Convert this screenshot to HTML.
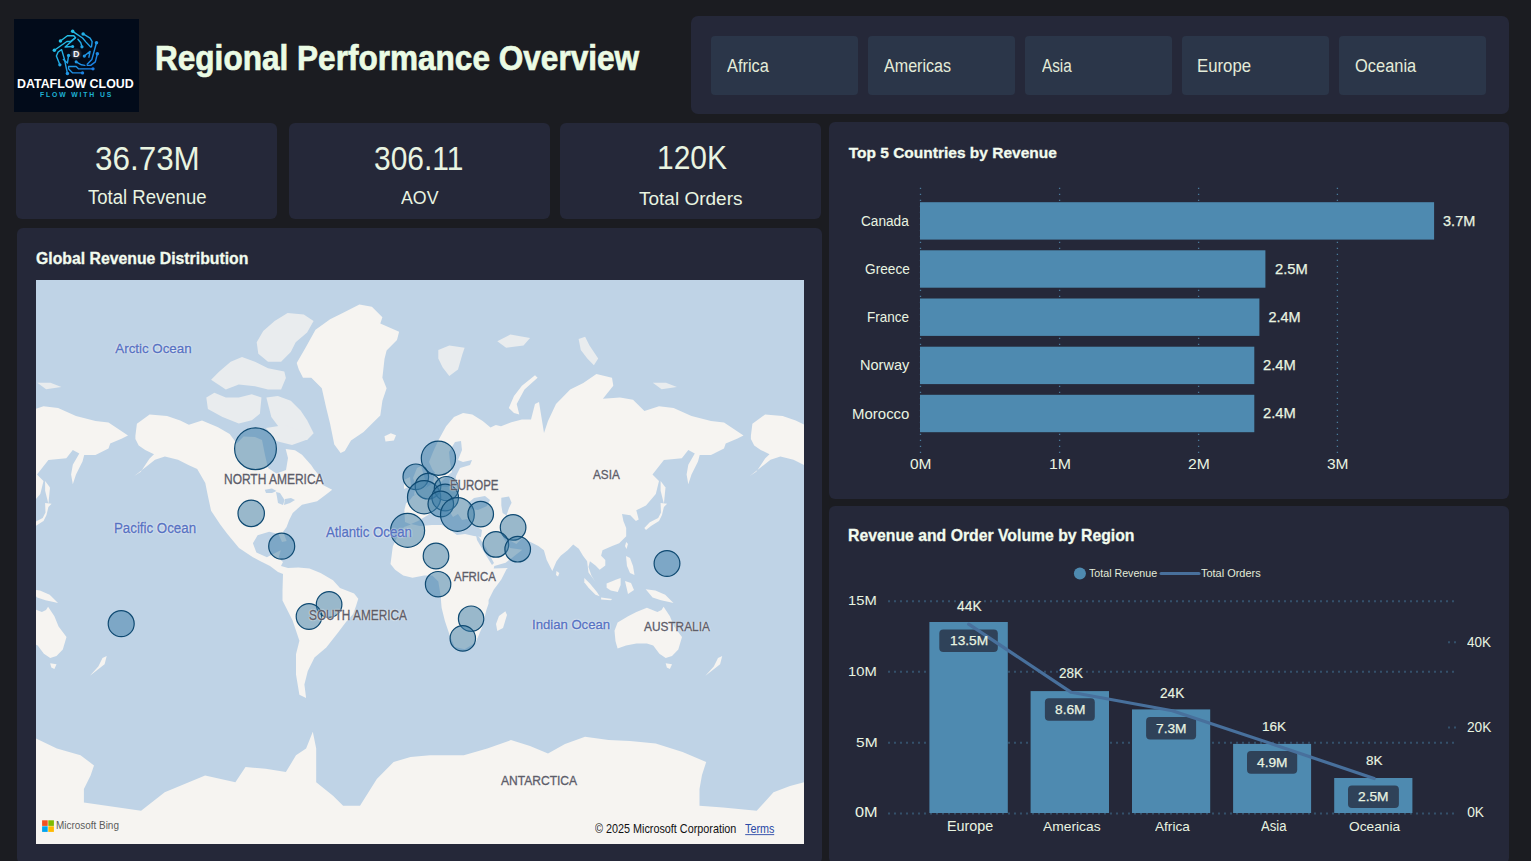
<!DOCTYPE html>
<html><head><meta charset="utf-8">
<style>
*{margin:0;padding:0;box-sizing:border-box}
html,body{width:1531px;height:861px;overflow:hidden;background:#1b1c21;font-family:"Liberation Sans",sans-serif;color:#eaf6e3}
.abs{position:absolute}
.card{position:absolute;background:#252839;border-radius:6px}
.t{position:absolute;white-space:nowrap;line-height:1;transform-origin:0 0}
.btn{position:absolute;top:35.5px;width:147px;height:59.5px;background:#2b3649;border-radius:4px}
svg{position:absolute;overflow:visible}
</style></head><body>

<!-- logo -->
<div class="abs" style="left:14px;top:18.5px;width:125px;height:93.5px;background:#020b1a"></div>
<svg style="left:0;top:0" width="160" height="120">
 <defs>
  <linearGradient id="lg" gradientUnits="userSpaceOnUse" x1="100" y1="100" x2="800" y2="800"><stop offset="0" stop-color="#27d3ea"/><stop offset="1" stop-color="#1a72e2"/></linearGradient>
  <radialGradient id="glow"><stop offset="0" stop-color="#ffffff" stop-opacity="0.35"/><stop offset="1" stop-color="#ffffff" stop-opacity="0"/></radialGradient>
 </defs>
 <g transform="translate(50,27) scale(0.05811)">
  <g fill="none" stroke="url(#lg)" stroke-width="24" stroke-linejoin="round" stroke-linecap="round">
   <polyline points="180,240 300,150 410,150 440,185 260,345 390,335"/>
   <polyline points="75,400 290,250 350,250 430,190"/>
   <polyline points="390,75 560,190 620,260 700,345"/>
   <polyline points="570,120 690,190 725,250 715,340"/>
   <polyline points="480,210 530,270 550,340"/>
   <polyline points="800,270 720,560 640,640"/>
   <polyline points="815,460 780,600 700,660 640,660"/>
   <polyline points="590,500 690,420 670,520"/>
   <polyline points="740,720 490,720 450,680 320,680 320,720"/>
   <polyline points="560,790 390,790 330,730"/>
   <polyline points="450,600 540,650 600,660"/>
   <polyline points="170,650 110,500 140,430 200,390 250,560 300,800"/>
   <polyline points="230,560 300,620 320,490"/>
  </g>
  <g fill="url(#lg)">
   <circle cx="180" cy="240" r="30"/><circle cx="75" cy="400" r="30"/><circle cx="390" cy="335" r="26"/><circle cx="390" cy="75" r="30"/><circle cx="570" cy="120" r="30"/><circle cx="550" cy="340" r="28"/><circle cx="800" cy="270" r="30"/><circle cx="815" cy="460" r="30"/><circle cx="590" cy="500" r="28"/><circle cx="740" cy="720" r="28"/><circle cx="560" cy="790" r="28"/><circle cx="450" cy="600" r="26"/><circle cx="170" cy="650" r="28"/><circle cx="300" cy="800" r="30"/><circle cx="320" cy="490" r="28"/>
  </g>
  <circle cx="447" cy="462" r="110" fill="url(#glow)"/>
 </g>
 <text x="73.1" y="57.3" font-family="Liberation Sans" font-weight="bold" font-size="9" fill="#f4f8ff">D</text>
</svg>

<!-- slicer -->
<div class="card" style="left:691px;top:16px;width:818px;height:98px;border-radius:7px"></div>
<div class="btn" style="left:710.7px"></div>
<div class="btn" style="left:867.9px"></div>
<div class="btn" style="left:1024.9px"></div>
<div class="btn" style="left:1181.9px"></div>
<div class="btn" style="left:1339px"></div>

<!-- KPI cards -->
<div class="card" style="left:16px;top:123px;width:261px;height:96px"></div>
<div class="card" style="left:289px;top:123px;width:261px;height:96px"></div>
<div class="card" style="left:560px;top:123px;width:261px;height:96px"></div>

<!-- map panel -->
<div class="card" style="left:16.5px;top:228px;width:805.5px;height:636px"></div>
<div class="abs" style="left:36px;top:280px;width:768px;height:564px;background:#bfd3e6;overflow:hidden">
<svg style="left:0;top:0" width="768" height="564" viewBox="0 0 768 564">
<g fill="#f6f4f1"><polygon points="99.4,155.7 100.9,143.7 113.6,134.5 131.1,136.0 144.2,140.4 152.9,144.8 166.0,140.4 179.1,145.9 182.0,147.2 193.7,154.1 200.7,163.4 207.6,156.5 219.0,157.0 226.0,160.0 229.0,175.0 232.0,188.0 240.5,193.4 250.0,190.0 252.0,178.0 249.7,169.0 259.0,170.2 266.0,174.8 275.3,185.3 277.6,188.8 282.3,194.6 286.9,205.0 296.2,209.7 290.4,214.3 281.1,221.3 266.0,224.8 256.7,232.9 253.2,240.0 250.6,247.0 247.1,251.7 250.6,261.0 246.0,262.1 242.5,254.0 233.2,251.7 221.6,255.2 216.9,263.3 220.4,272.6 230.9,277.2 240.1,272.6 244.8,270.3 242.5,278.0 247.0,282.0 245.0,286.0 252.0,288.0 262.3,287.4 273.5,288.4 284.6,293.0 297.0,300.2 304.0,308.0 318.1,313.5 322.3,318.7 320.0,326.0 317.2,333.9 310.0,342.0 302.1,352.4 290.3,367.5 278.5,377.6 271.8,391.1 268.4,404.6 270.1,418.0 263.4,414.7 260.0,394.5 260.0,374.3 263.4,360.8 256.6,340.6 246.5,320.4 246.5,310.3 247.0,294.0 242.0,292.0 234.0,286.0 224.0,281.0 216.9,277.2 203.0,268.0 191.4,254.0 184.4,244.7 175.1,230.8 171.6,214.5 169.3,202.9 161.2,189.0 152.9,185.2 142.0,179.7 128.9,176.5 119.0,179.7 109.2,187.4 98.3,196.1 104.8,191.7 113.6,178.6 118.0,174.3 109.2,169.9 102.7,165.5 99.4,159.0"/><polygon points="714.9,155.7 716.4,143.7 729.1,134.5 746.6,136.0 759.7,140.4 768.4,144.8 781.5,140.4 794.6,145.9 797.5,147.2 809.2,154.1 816.2,163.4 823.1,156.5 834.5,157.0 841.5,160.0 844.5,175.0 847.5,188.0 856.0,193.4 865.5,190.0 867.5,178.0 865.2,169.0 874.5,170.2 881.5,174.8 890.8,185.3 893.1,188.8 897.8,194.6 902.4,205.0 911.7,209.7 905.9,214.3 896.6,221.3 881.5,224.8 872.2,232.9 868.7,240.0 866.1,247.0 862.6,251.7 866.1,261.0 861.5,262.1 858.0,254.0 848.7,251.7 837.1,255.2 832.4,263.3 835.9,272.6 846.4,277.2 855.6,272.6 860.3,270.3 858.0,278.0 862.5,282.0 860.5,286.0 867.5,288.0 877.8,287.4 889.0,288.4 900.1,293.0 912.5,300.2 919.5,308.0 933.6,313.5 937.8,318.7 935.5,326.0 932.7,333.9 925.5,342.0 917.6,352.4 905.8,367.5 894.0,377.6 887.3,391.1 883.9,404.6 885.6,418.0 878.9,414.7 875.5,394.5 875.5,374.3 878.9,360.8 872.1,340.6 862.0,320.4 862.0,310.3 862.5,294.0 857.5,292.0 849.5,286.0 839.5,281.0 832.4,277.2 818.5,268.0 806.9,254.0 799.9,244.7 790.6,230.8 787.1,214.5 784.8,202.9 776.7,189.0 768.4,185.2 757.5,179.7 744.4,176.5 734.5,179.7 724.7,187.4 713.8,196.1 720.3,191.7 729.1,178.6 733.5,174.3 724.7,169.9 718.2,165.5 714.9,159.0"/><polygon points="227.2,50.9 238.6,41.1 251.6,33.0 267.8,34.6 277.6,41.1 271.1,52.5 259.7,62.3 254.8,72.0 245.1,81.8 232.0,81.8 222.3,73.7 220.7,62.3" fill="#e9ecee"/><polygon points="175.1,99.7 183.3,91.5 194.7,81.8 206.0,76.9 219.0,81.8 232.0,88.3 248.3,91.5 249.9,98.0 245.1,109.4 232.0,109.4 219.0,106.2 202.8,104.6 189.8,109.4" fill="#e9ecee"/><polygon points="170.3,117.6 178.4,112.7 189.8,117.6 202.8,117.6 215.8,114.3 225.5,117.6 223.9,133.8 215.8,140.3 202.8,143.6 186.5,137.1 171.9,128.9" fill="#e9ecee"/><polygon points="230.4,117.6 241.8,115.9 254.8,120.8 264.6,130.6 271.1,140.3 277.6,153.3 271.1,160.0 254.8,160.0 245.1,150.1 235.3,137.1" fill="#e9ecee"/><polygon points="230.0,148.0 249.0,145.0 264.0,151.0 270.0,160.0 256.0,165.0 240.0,161.0" fill="#e9ecee"/><polygon points="260.7,83.1 269.1,68.5 279.5,49.7 294.1,39.3 306.7,33.0 323.4,24.6 335.9,26.7 346.4,37.2 344.3,43.4 363.1,51.8 361.0,60.1 350.6,70.6 348.5,79.0 346.4,97.8 350.6,108.2 346.4,120.7 344.3,135.4 335.9,143.7 327.6,152.1 315.0,160.4 308.8,170.9 304.6,173.0 298.3,164.6 294.1,143.7 290.0,127.0 285.8,108.2 275.3,97.8 267.0,97.8 262.8,89.4"/><polygon points="348.5,156.3 354.8,153.2 360.0,155.3 357.9,160.5 349.5,161.6"/><polygon points="393.0,182.0 397.0,172.0 402.3,160.5 410.1,146.2 418.0,137.0 427.1,133.1 436.3,134.4 446.7,141.0 454.5,147.5 459.8,144.9 465.0,146.2 475.4,142.3 485.9,139.6 495.0,139.6 499.0,124.0 503.0,122.0 508.0,153.0 512.0,141.0 520.0,124.0 534.2,109.6 547.3,103.1 560.4,93.9 576.0,97.8 577.3,105.7 566.9,118.7 584.0,117.4 597.0,119.8 608.4,131.1 623.0,126.3 637.6,127.9 655.5,136.0 675.0,140.9 688.0,142.5 697.8,149.0 707.5,155.5 701.0,158.8 689.7,163.6 688.0,168.5 675.0,175.0 663.7,175.0 662.0,181.5 655.5,194.5 652.3,204.3 650.6,194.5 652.3,184.8 658.8,173.4 652.3,170.1 645.8,178.3 627.9,179.9 616.5,194.5 623.0,201.0 619.8,214.0 610.0,225.4 600.3,230.3 602.7,239.5 599.9,240.9 594.3,235.3 586.0,233.9 587.4,240.9 590.2,247.9 590.2,256.2 583.2,263.2 576.2,266.0 566.5,270.2 565.1,275.7 569.3,279.9 569.3,285.5 563.7,289.7 559.5,285.5 553.9,281.3 552.5,286.9 555.3,295.3 559.5,302.2 556.7,298.0 552.5,292.5 551.1,281.3 547.0,275.7 542.8,268.8 537.2,264.6 531.6,270.2 524.7,275.7 520.5,281.3 516.3,291.1 510.7,279.9 507.9,270.2 502.4,266.0 494.0,261.8 485.8,258.6 480.4,263.9 466.3,256.5 474.0,268.0 486.3,269.8 469.6,282.8 458.3,286.0 457.7,288.4 471.9,287.9 470.5,289.2 465.3,299.5 457.7,309.7 452.6,320.0 452.6,323.4 450.4,330.0 446.0,347.5 439.5,362.7 428.6,369.3 418.7,367.1 413.3,354.0 408.9,340.9 405.6,327.8 404.5,314.7 402.3,301.6 396.3,295.5 388.1,295.5 376.5,297.8 367.2,295.5 359.1,289.7 354.5,283.9 355.6,275.7 356.8,266.5 362.0,255.0 368.0,247.0 375.0,244.5 369.0,241.9 368.4,230.0 370.0,223.5 374.0,220.0 376.8,216.2 384.0,212.0 397.0,203.0 399.0,192.7 396.4,189.6"/><polygon points="-222.5,182.0 -218.5,172.0 -213.2,160.5 -205.4,146.2 -197.5,137.0 -188.4,133.1 -179.2,134.4 -168.8,141.0 -161.0,147.5 -155.7,144.9 -150.5,146.2 -140.1,142.3 -129.6,139.6 -120.5,139.6 -116.5,124.0 -112.5,122.0 -107.5,153.0 -103.5,141.0 -95.5,124.0 -81.3,109.6 -68.2,103.1 -55.1,93.9 -39.5,97.8 -38.2,105.7 -48.6,118.7 -31.5,117.4 -18.5,119.8 -7.1,131.1 7.5,126.3 22.1,127.9 40.0,136.0 59.5,140.9 72.5,142.5 82.3,149.0 92.0,155.5 85.5,158.8 74.2,163.6 72.5,168.5 59.5,175.0 48.2,175.0 46.5,181.5 40.0,194.5 36.8,204.3 35.1,194.5 36.8,184.8 43.3,173.4 36.8,170.1 30.3,178.3 12.4,179.9 1.0,194.5 7.5,201.0 4.3,214.0 -5.5,225.4 -15.2,230.3 -12.8,239.5 -15.6,240.9 -21.2,235.3 -29.5,233.9 -28.1,240.9 -25.3,247.9 -25.3,256.2 -32.3,263.2 -39.3,266.0 -49.0,270.2 -50.4,275.7 -46.2,279.9 -46.2,285.5 -51.8,289.7 -56.0,285.5 -61.6,281.3 -63.0,286.9 -60.2,295.3 -56.0,302.2 -58.8,298.0 -63.0,292.5 -64.4,281.3 -68.5,275.7 -72.7,268.8 -78.3,264.6 -83.9,270.2 -90.8,275.7 -95.0,281.3 -99.2,291.1 -104.8,279.9 -107.6,270.2 -113.1,266.0 -121.5,261.8 -129.7,258.6 -135.1,263.9 -149.2,256.5 -141.5,268.0 -129.2,269.8 -145.9,282.8 -157.2,286.0 -157.8,288.4 -143.6,287.9 -145.0,289.2 -150.2,299.5 -157.8,309.7 -162.9,320.0 -162.9,323.4 -165.1,330.0 -169.5,347.5 -176.0,362.7 -186.9,369.3 -196.8,367.1 -202.2,354.0 -206.6,340.9 -209.9,327.8 -211.0,314.7 -213.2,301.6 -219.2,295.5 -227.4,295.5 -239.0,297.8 -248.3,295.5 -256.4,289.7 -261.0,283.9 -259.9,275.7 -258.7,266.5 -253.5,255.0 -247.5,247.0 -240.5,244.5 -246.5,241.9 -247.1,230.0 -245.5,223.5 -241.5,220.0 -238.7,216.2 -231.5,212.0 -218.5,203.0 -216.5,192.7 -219.1,189.6"/><polygon points="381.0,188.0 385.0,186.0 388.0,196.0 391.0,206.0 386.0,212.0 378.0,215.0 380.0,205.0 377.0,198.0"/><polygon points="368.0,200.0 374.0,197.0 375.0,206.0 368.0,209.0"/><polygon points="469.4,331.2 471.0,335.0 467.0,348.0 461.3,351.0 460.0,344.0 463.0,336.0"/><polygon points="520.5,291.0 523.3,293.0 522.0,296.5 520.0,295.0"/><polygon points="472.8,127.9 478.0,116.1 485.9,105.7 499.0,95.2 501.6,97.8 488.5,109.6 480.7,124.0 483.3,134.4 478.0,133.1"/><polygon points="402.3,69.9 413.3,65.5 428.6,67.7 426.4,74.3 422.0,89.6 413.3,96.1 406.7,87.4 402.3,78.6" fill="#e9ecee"/><polygon points="461.3,61.2 474.4,54.6 494.1,57.9 487.5,65.5 470.1,67.7" fill="#e9ecee"/><polygon points="542.6,59.0 549.1,56.8 553.5,65.5 562.2,78.6 557.9,85.2 551.3,78.6 544.8,69.9" fill="#e9ecee"/><polygon points="616.8,102.7 630.0,102.7 640.9,107.0 625.6,109.2" fill="#e9ecee"/><polygon points="1.3,102.7 14.5,102.7 25.4,107.0 10.1,109.2" fill="#e9ecee"/><polygon points="608.3,247.9 613.8,242.3 622.2,238.1 625.0,232.5 624.6,223.0 631.1,223.8 627.9,227.0 626.0,235.0 623.0,241.0 615.0,246.0 610.0,250.0"/><polygon points="-7.2,247.9 -1.7,242.3 6.7,238.1 9.5,232.5 9.1,223.0 15.6,223.8 12.4,227.0 10.5,235.0 7.5,241.0 -0.5,246.0 -5.5,250.0"/><polygon points="624.6,201.0 629.5,207.5 627.9,223.8 624.6,210.8"/><polygon points="9.1,201.0 14.0,207.5 12.4,223.8 9.1,210.8"/><polygon points="590.2,262.0 592.0,264.0 590.5,269.0 589.0,266.0"/><polygon points="590.0,276.0 594.0,278.0 597.0,286.0 598.5,295.0 594.0,293.0 591.0,286.0"/><polygon points="548.3,298.0 553.9,303.6 560.9,312.0 563.7,316.2 559.5,314.8 552.5,307.8 548.3,302.2"/><polygon points="565.1,317.5 576.2,318.9 574.8,320.3 565.1,319.6"/><polygon points="570.6,303.6 580.4,299.4 584.6,298.0 584.6,305.0 581.8,312.0 574.8,310.6 570.6,307.8"/><polygon points="589.0,301.0 595.0,303.0 598.0,310.0 592.0,314.0"/><polygon points="609.7,309.2 619.4,310.6 629.2,314.8 637.5,323.1 632.0,321.7 625.0,320.3 616.6,317.5"/><polygon points="-5.8,309.2 3.9,310.6 13.7,314.8 22.0,323.1 16.5,321.7 9.5,320.3 1.1,317.5"/><polygon points="578.5,350.8 581.6,342.4 592.1,336.2 600.4,332.0 610.9,327.8 621.4,332.0 625.5,329.9 627.6,326.8 633.9,336.2 638.1,346.6 646.0,357.1 642.3,369.6 636.0,375.9 629.7,378.0 623.4,373.8 617.2,365.4 610.9,363.4 600.4,363.4 590.0,365.4 581.6,368.6 579.5,361.3"/><polygon points="-37.0,350.8 -33.9,342.4 -23.4,336.2 -15.1,332.0 -4.6,327.8 5.9,332.0 10.0,329.9 12.1,326.8 18.4,336.2 22.6,346.6 30.5,357.1 26.8,369.6 20.5,375.9 14.2,378.0 7.9,373.8 1.7,365.4 -4.6,363.4 -15.1,363.4 -25.5,365.4 -33.9,368.6 -36.0,361.3"/><polygon points="629.7,383.2 636.0,384.3 633.9,388.9 630.8,387.4"/><polygon points="14.2,383.2 20.5,384.3 18.4,388.9 15.3,387.4"/><polygon points="669.4,395.8 677.8,386.4 682.0,378.0 686.2,375.9 684.1,384.3 673.6,392.6"/><polygon points="53.9,395.8 62.3,386.4 66.5,378.0 70.7,375.9 68.6,384.3 58.1,392.6"/><polygon points="0.0,458.5 20.9,468.6 44.5,475.3 58.0,485.4 54.6,495.5 47.9,509.0 47.9,522.4 105.1,530.8 128.7,512.3 169.1,495.5 199.4,502.2 209.5,487.1 229.7,488.8 249.9,492.1 260.0,475.3 270.1,468.6 276.8,451.7 280.2,468.6 280.2,502.2 297.0,515.7 307.1,525.8 324.0,525.8 340.8,498.9 357.6,482.0 374.5,477.0 394.0,475.3 427.8,475.3 451.3,468.6 474.9,460.1 494.0,466.0 512.0,473.6 529.0,464.0 549.0,456.8 572.6,460.1 594.0,461.0 619.7,463.5 646.6,471.9 670.2,482.0 666.0,495.0 663.5,509.0 663.5,525.8 687.0,527.5 720.7,530.8 737.5,512.3 754.0,506.0 768.0,502.2 768.0,564.0 0.0,564.0"/></g><g fill="#bfd3e6"><polygon points="228.8,209.7 236.0,208.5 240.5,211.0 236.0,213.0 230.0,213.0"/><polygon points="240.0,212.0 244.0,213.0 248.6,220.0 247.0,225.0 242.0,223.0 241.0,217.0"/><polygon points="249.0,219.0 255.0,218.0 259.0,220.0 254.0,223.0 248.0,225.0"/><polygon points="375.0,244.0 382.0,241.0 392.0,235.0 398.0,230.0 405.0,227.0 414.0,232.0 417.0,237.0 422.0,234.0 426.0,240.0 431.0,239.0 438.0,245.0 446.0,250.0 445.0,257.0 438.0,256.0 429.0,254.0 421.0,255.0 414.0,250.0 406.0,245.0 396.0,245.0 384.0,246.0"/><polygon points="432.0,223.0 438.0,218.0 449.0,216.0 454.0,220.0 451.0,226.0 442.0,230.0 434.0,229.0"/><polygon points="465.3,217.7 473.0,216.4 475.6,222.8 473.0,227.9 470.5,235.6 466.6,233.0 465.3,225.3"/><polygon points="440.0,255.0 443.0,257.0 450.0,268.0 458.0,283.0 456.0,285.0 448.0,272.0 441.0,260.0"/><polygon points="401.0,206.0 409.0,198.0 416.0,192.0 414.0,182.0 413.0,172.0 419.0,162.0 425.0,161.0 426.0,170.0 422.0,180.0 427.0,182.0 436.0,180.0 434.0,185.0 424.0,188.0 420.0,196.0 419.0,204.0 411.0,207.0"/></g>
<g fill="#3b7ca6" fill-opacity="0.5" stroke="#0f4a72" stroke-width="1.2">
<circle cx="219.5" cy="168.7" r="20.9"/>
<circle cx="215.2" cy="233.4" r="13.2"/>
<circle cx="245.7" cy="266.2" r="13"/>
<circle cx="85.2" cy="343.7" r="13"/>
<circle cx="293.1" cy="324.5" r="12.8"/>
<circle cx="273" cy="336.5" r="12.8"/>
<circle cx="402.4" cy="178.2" r="17.1"/>
<circle cx="379.8" cy="196.8" r="12.8"/>
<circle cx="392" cy="206.2" r="12.8"/>
<circle cx="388.1" cy="217.2" r="16.6"/>
<circle cx="410.4" cy="208.6" r="12.1"/>
<circle cx="409.2" cy="217.5" r="13.3"/>
<circle cx="404.8" cy="224" r="12.8"/>
<circle cx="421.4" cy="234.5" r="16.9"/>
<circle cx="444.7" cy="234.1" r="12.8"/>
<circle cx="371.6" cy="250.4" r="17"/>
<circle cx="400" cy="276" r="12.8"/>
<circle cx="402.1" cy="304.2" r="12.7"/>
<circle cx="477.1" cy="247.4" r="12.8"/>
<circle cx="459.9" cy="264.4" r="12.8"/>
<circle cx="481.7" cy="269.2" r="12.8"/>
<circle cx="435.1" cy="338.7" r="12.7"/>
<circle cx="426.8" cy="358.4" r="12.7"/>
<circle cx="631" cy="283.5" r="12.9"/>
</g>
<g>
<rect x="6.1" y="540.3" width="5.6" height="5.6" fill="#f25022"/>
<rect x="12.3" y="540.3" width="5.6" height="5.6" fill="#7fba00"/>
<rect x="6.1" y="546.3" width="5.6" height="5.6" fill="#00a4ef"/>
<rect x="12.3" y="546.3" width="5.6" height="5.6" fill="#ffb900"/>
<rect x="709.2" y="554.2" width="29" height="0.9" fill="#2b4aa6"/>
</g>
</svg>
</div>

<!-- top 5 panel -->
<div class="card" style="left:829px;top:122px;width:680px;height:377px"></div>
<svg style="left:0;top:0" width="1531" height="861">
 <g stroke="#4a7a9a" stroke-width="1.3" stroke-dasharray="1.2 4.8">
  <line x1="920.5" y1="187.8" x2="920.5" y2="454"/>
  <line x1="1059.6" y1="187.8" x2="1059.6" y2="454"/>
  <line x1="1198.6" y1="187.8" x2="1198.6" y2="454"/>
  <line x1="1337.4" y1="187.8" x2="1337.4" y2="454"/>
 </g>
 <g fill="#4e8ab0">
  <rect x="920" y="202.2" width="514.1" height="37.4"/>
  <rect x="920" y="250.3" width="345.4" height="37.4"/>
  <rect x="920" y="298.5" width="339.4" height="37.4"/>
  <rect x="920" y="346.7" width="334.3" height="37.4"/>
  <rect x="920" y="394.8" width="334.3" height="37.4"/>
 </g>
</svg>

<!-- revenue region panel -->
<div class="card" style="left:829px;top:506px;width:680px;height:358px"></div>
<svg style="left:0;top:0" width="1531" height="861">
 <g stroke="#34506b" stroke-width="2" stroke-dasharray="2 4">
  <line x1="888" y1="601.2" x2="1455" y2="601.2"/>
  <line x1="888" y1="671.7" x2="1455" y2="671.7"/>
  <line x1="888" y1="742.7" x2="1455" y2="742.7"/>
  <line x1="888" y1="813.6" x2="1455" y2="813.6"/>
  <line x1="1448" y1="642.2" x2="1457" y2="642.2"/>
  <line x1="1448" y1="727.4" x2="1457" y2="727.4"/>
 </g>
 <g fill="#4e8ab0">
  <rect x="929.4" y="622" width="78.4" height="191"/>
  <rect x="1030.6" y="691.1" width="78.4" height="121.9"/>
  <rect x="1132" y="709.4" width="78.2" height="103.6"/>
  <rect x="1233.1" y="743.9" width="78" height="69.1"/>
  <rect x="1334.2" y="778" width="78.2" height="35"/>
 </g>
 <g fill="#2f4259">
  <rect x="939.3" y="629.6" width="58.5" height="22.5" rx="4"/>
  <rect x="1044.9" y="698.3" width="49.9" height="22.5" rx="4"/>
  <rect x="1146.1" y="716.9" width="50" height="22.5" rx="4"/>
  <rect x="1247" y="751" width="50.2" height="22.7" rx="4"/>
  <rect x="1348" y="785.4" width="50.9" height="22.6" rx="4"/>
 </g>
 <polyline points="968.7,624.2 1071.2,692.3 1172.4,710.8 1273.6,744.4 1374.2,778.6" fill="none" stroke="#48709c" stroke-width="3.2" stroke-linejoin="round" stroke-linecap="round"/>
 <circle cx="1079.9" cy="573.4" r="6" fill="#4e8ab0"/>
 <line x1="1161" y1="573.4" x2="1199" y2="573.4" stroke="#48709c" stroke-width="3" stroke-linecap="round"/>
</svg>

<div class="t" style="left:155.03px;top:40.59px;font-size:34.93px;color:#ebfbe4;font-weight:bold;transform:scaleX(0.9037);-webkit-text-stroke:0.7px #ebfbe4;">Regional Performance Overview</div>
<div class="t" style="left:94.82px;top:141.32px;font-size:34.06px;color:#e9f4e1;transform:scaleX(0.9225);">36.73M</div>
<div class="t" style="left:373.96px;top:141.76px;font-size:33.19px;color:#e9f4e1;transform:scaleX(0.9031);">306.11</div>
<div class="t" style="left:656.93px;top:141.34px;font-size:33.91px;color:#e9f4e1;transform:scaleX(0.8838);">120K</div>
<div class="t" style="left:88.11px;top:188.17px;font-size:19.57px;color:#e9f4e1;transform:scaleX(0.9477);">Total Revenue</div>
<div class="t" style="left:401.30px;top:188.88px;font-size:18.84px;color:#e9f4e1;transform:scaleX(0.9428);">AOV</div>
<div class="t" style="left:639.45px;top:188.51px;font-size:19.28px;color:#e9f4e1;transform:scaleX(0.9863);">Total Orders</div>
<div class="t" style="left:727.20px;top:56.03px;font-size:19.13px;color:#e4ecd9;transform:scaleX(0.8568);">Africa</div>
<div class="t" style="left:884.40px;top:56.03px;font-size:19.13px;color:#e4ecd9;transform:scaleX(0.8417);">Americas</div>
<div class="t" style="left:1041.60px;top:56.03px;font-size:19.13px;color:#e4ecd9;transform:scaleX(0.8008);">Asia</div>
<div class="t" style="left:1197.19px;top:56.03px;font-size:19.13px;color:#e4ecd9;transform:scaleX(0.8768);">Europe</div>
<div class="t" style="left:1354.83px;top:56.03px;font-size:19.13px;color:#e4ecd9;transform:scaleX(0.8598);">Oceania</div>
<div class="t" style="left:36.01px;top:250.75px;font-size:15.80px;color:#f2fbee;font-weight:bold;-webkit-text-stroke:0.3px #f2fbee;">Global Revenue Distribution</div>
<div class="t" style="left:848.70px;top:145.30px;font-size:15.51px;color:#f2fbee;font-weight:bold;-webkit-text-stroke:0.3px #f2fbee;">Top 5 Countries by Revenue</div>
<div class="t" style="left:847.51px;top:528.29px;font-size:16.81px;color:#f2fbee;font-weight:bold;transform:scaleX(0.9397);-webkit-text-stroke:0.3px #f2fbee;">Revenue and Order Volume by Region</div>
<div class="t" style="left:861.16px;top:213.82px;font-size:14.06px;color:#e9f4e1;transform:scaleX(0.9697);">Canada</div>
<div class="t" style="left:864.66px;top:261.65px;font-size:14.49px;color:#e9f4e1;transform:scaleX(0.9447);">Greece</div>
<div class="t" style="left:867.44px;top:310.00px;font-size:14.20px;color:#e9f4e1;transform:scaleX(0.9525);">France</div>
<div class="t" style="left:859.66px;top:358.00px;font-size:14.20px;color:#e9f4e1;transform:scaleX(1.0248);">Norway</div>
<div class="t" style="left:852.13px;top:406.82px;font-size:14.06px;color:#e9f4e1;transform:scaleX(1.0663);">Morocco</div>
<div class="t" style="left:1443.05px;top:213.65px;font-size:14.49px;color:#e9f4e1;-webkit-text-stroke:0.25px #e9f4e1;">3.7M</div>
<div class="t" style="left:1274.51px;top:261.65px;font-size:14.49px;color:#e9f4e1;transform:scaleX(1.0176);-webkit-text-stroke:0.25px #e9f4e1;">2.5M</div>
<div class="t" style="left:1268.42px;top:309.85px;font-size:14.49px;color:#e9f4e1;-webkit-text-stroke:0.25px #e9f4e1;">2.4M</div>
<div class="t" style="left:1263.31px;top:357.85px;font-size:14.49px;color:#e9f4e1;transform:scaleX(1.0176);-webkit-text-stroke:0.25px #e9f4e1;">2.4M</div>
<div class="t" style="left:1263.31px;top:406.05px;font-size:14.49px;color:#e9f4e1;transform:scaleX(1.0176);-webkit-text-stroke:0.25px #e9f4e1;">2.4M</div>
<div class="t" style="left:909.92px;top:458.44px;font-size:13.91px;color:#e9f4e1;transform:scaleX(1.1139);">0M</div>
<div class="t" style="left:1048.61px;top:458.44px;font-size:13.91px;color:#e9f4e1;transform:scaleX(1.1415);">1M</div>
<div class="t" style="left:1187.86px;top:458.44px;font-size:13.91px;color:#e9f4e1;transform:scaleX(1.1275);">2M</div>
<div class="t" style="left:1326.92px;top:458.44px;font-size:13.91px;color:#e9f4e1;transform:scaleX(1.1139);">3M</div>
<div class="t" style="left:848.48px;top:594.39px;font-size:13.62px;color:#e9f4e1;transform:scaleX(1.0836);">15M</div>
<div class="t" style="left:848.48px;top:665.29px;font-size:13.62px;color:#e9f4e1;transform:scaleX(1.0836);">10M</div>
<div class="t" style="left:855.91px;top:735.61px;font-size:13.48px;color:#e9f4e1;transform:scaleX(1.1556);">5M</div>
<div class="t" style="left:854.99px;top:806.17px;font-size:13.77px;color:#e9f4e1;transform:scaleX(1.1819);">0M</div>
<div class="t" style="left:1467.39px;top:635.67px;font-size:13.77px;color:#e9f4e1;transform:scaleX(0.9779);">40K</div>
<div class="t" style="left:1466.96px;top:720.20px;font-size:14.20px;color:#e9f4e1;transform:scaleX(0.9651);">20K</div>
<div class="t" style="left:1467.17px;top:806.37px;font-size:13.77px;color:#e9f4e1;">0K</div>
<div class="t" style="left:957.38px;top:598.95px;font-size:14.49px;color:#e9f4e1;transform:scaleX(0.9565);-webkit-text-stroke:0.15px #e9f4e1;">44K</div>
<div class="t" style="left:1058.87px;top:665.90px;font-size:14.20px;color:#e9f4e1;transform:scaleX(0.9488);-webkit-text-stroke:0.15px #e9f4e1;">28K</div>
<div class="t" style="left:1160.36px;top:685.72px;font-size:14.06px;color:#e9f4e1;transform:scaleX(0.9709);-webkit-text-stroke:0.15px #e9f4e1;">24K</div>
<div class="t" style="left:1261.85px;top:719.73px;font-size:13.33px;color:#e9f4e1;transform:scaleX(1.0199);-webkit-text-stroke:0.15px #e9f4e1;">16K</div>
<div class="t" style="left:1366.48px;top:753.61px;font-size:13.48px;color:#e9f4e1;transform:scaleX(1.0050);-webkit-text-stroke:0.15px #e9f4e1;">8K</div>
<div class="t" style="left:946.58px;top:820.07px;font-size:13.77px;color:#e9f4e1;transform:scaleX(1.0430);">Europe</div>
<div class="t" style="left:1042.50px;top:820.33px;font-size:13.33px;color:#e9f4e1;transform:scaleX(1.0372);">Americas</div>
<div class="t" style="left:1154.70px;top:820.21px;font-size:13.48px;color:#e9f4e1;transform:scaleX(1.0105);">Africa</div>
<div class="t" style="left:1260.60px;top:819.87px;font-size:13.77px;color:#e9f4e1;transform:scaleX(0.9527);">Asia</div>
<div class="t" style="left:1348.65px;top:820.09px;font-size:13.62px;color:#e9f4e1;transform:scaleX(1.0102);">Oceania</div>
<div class="t" style="left:1088.63px;top:568.13px;font-size:11.45px;color:#e3ecd9;transform:scaleX(0.9317);">Total Revenue</div>
<div class="t" style="left:1201.13px;top:568.13px;font-size:11.45px;color:#e3ecd9;transform:scaleX(0.9576);">Total Orders</div>
<div class="t" style="left:949.50px;top:634.28px;font-size:13.33px;color:#e9f4e1;transform:scaleX(1.0300);-webkit-text-stroke:0.25px #e9f4e1;">13.5M</div>
<div class="t" style="left:1054.83px;top:702.98px;font-size:13.33px;color:#e9f4e1;transform:scaleX(1.0300);-webkit-text-stroke:0.25px #e9f4e1;">8.6M</div>
<div class="t" style="left:1155.98px;top:721.58px;font-size:13.33px;color:#e9f4e1;transform:scaleX(1.0300);-webkit-text-stroke:0.25px #e9f4e1;">7.3M</div>
<div class="t" style="left:1257.19px;top:755.78px;font-size:13.33px;color:#e9f4e1;transform:scaleX(1.0300);-webkit-text-stroke:0.25px #e9f4e1;">4.9M</div>
<div class="t" style="left:1358.33px;top:790.13px;font-size:13.33px;color:#e9f4e1;transform:scaleX(1.0300);-webkit-text-stroke:0.25px #e9f4e1;">2.5M</div>
<div class="t" style="left:115.30px;top:341.53px;font-size:13.33px;color:#5672c2;text-shadow:0 0 1.5px #fff,0 0 2px #fff;-webkit-text-stroke:0.35px #5672c2;">Arctic Ocean</div>
<div class="t" style="left:113.86px;top:521.94px;font-size:13.91px;color:#5672c2;transform:scaleX(0.9563);text-shadow:0 0 1.5px #fff,0 0 2px #fff;-webkit-text-stroke:0.35px #5672c2;">Pacific Ocean</div>
<div class="t" style="left:326.20px;top:525.40px;font-size:14.20px;color:#5672c2;transform:scaleX(0.9315);text-shadow:0 0 1.5px #fff,0 0 2px #fff;-webkit-text-stroke:0.35px #5672c2;">Atlantic Ocean</div>
<div class="t" style="left:531.87px;top:618.43px;font-size:13.33px;color:#5672c2;transform:scaleX(0.9842);text-shadow:0 0 1.5px #fff,0 0 2px #fff;-webkit-text-stroke:0.35px #5672c2;">Indian Ocean</div>
<div class="t" style="left:224.06px;top:471.60px;font-size:14.20px;color:#5d5d69;transform:scaleX(0.8434);text-shadow:0 0 1.5px #fff,0 0 2px #fff;-webkit-text-stroke:0.35px #5d5d69;">NORTH AMERICA</div>
<div class="t" style="left:450.00px;top:479.17px;font-size:13.77px;color:#5d5d69;transform:scaleX(0.8338);text-shadow:0 0 1.5px #fff,0 0 2px #fff;-webkit-text-stroke:0.35px #5d5d69;">EUROPE</div>
<div class="t" style="left:592.80px;top:467.51px;font-size:13.48px;color:#5d5d69;transform:scaleX(0.8707);text-shadow:0 0 1.5px #fff,0 0 2px #fff;-webkit-text-stroke:0.35px #5d5d69;">ASIA</div>
<div class="t" style="left:453.60px;top:570.33px;font-size:13.33px;color:#5d5d69;transform:scaleX(0.8579);text-shadow:0 0 1.5px #fff,0 0 2px #fff;-webkit-text-stroke:0.35px #5d5d69;">AFRICA</div>
<div class="t" style="left:309.13px;top:608.87px;font-size:13.77px;color:#5d5d69;transform:scaleX(0.8594);text-shadow:0 0 1.5px #fff,0 0 2px #fff;-webkit-text-stroke:0.35px #5d5d69;">SOUTH AMERICA</div>
<div class="t" style="left:644.10px;top:619.56px;font-size:13.19px;color:#5d5d69;transform:scaleX(0.8984);text-shadow:0 0 1.5px #fff,0 0 2px #fff;-webkit-text-stroke:0.35px #5d5d69;">AUSTRALIA</div>
<div class="t" style="left:500.60px;top:773.63px;font-size:13.33px;color:#5d5d69;transform:scaleX(0.9043);text-shadow:0 0 1.5px #fff,0 0 2px #fff;-webkit-text-stroke:0.35px #5d5d69;">ANTARCTICA</div>
<div class="t" style="left:595.00px;top:822.74px;font-size:12.03px;color:#111111;transform:scaleX(0.8996);">© 2025 Microsoft Corporation</div>
<div class="t" style="left:745.03px;top:822.74px;font-size:12.03px;color:#2b4aa6;transform:scaleX(0.8980);">Terms</div>
<div class="t" style="left:56.02px;top:820.27px;font-size:11.16px;color:#5b5b5b;transform:scaleX(0.8902);">Microsoft Bing</div>
<div class="t" style="left:17.32px;top:78.76px;font-size:11.88px;color:#ffffff;font-weight:bold;transform:scaleX(1.0450);">DATAFLOW CLOUD</div>
<div class="t" style="left:40.37px;top:92.07px;font-size:6.67px;color:#1eb2d4;font-weight:bold;transform:scaleX(1.0216);">F L O W   W I T H   U S</div>
</body></html>
